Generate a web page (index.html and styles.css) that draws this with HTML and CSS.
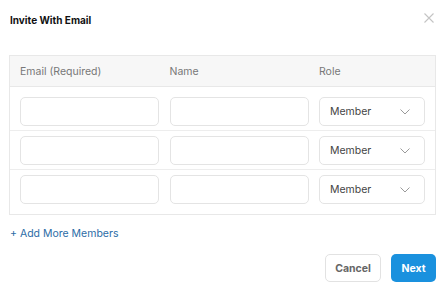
FILE: index.html
```html
<!DOCTYPE html>
<html lang="en">
<head>
    <meta charset="UTF-8">
    <meta name="viewport" content="width=device-width, initial-scale=1.0">
    <title>Invite With Email</title>
    <link rel="stylesheet" href="styles.css">
</head>
<body>
    <div class="modal">
        <div class="modal-head">
            <h2>Invite With Email</h2>
            <svg class="close" width="10" height="10" viewBox="0 0 10 10">
                <path d="M0.5 0.5 L9.5 9.5 M9.5 0.5 L0.5 9.5" stroke="#c4c4c4" stroke-width="1.1" fill="none"/>
            </svg>
        </div>

        <div class="invite-table">
            <div class="row head-row">
                <div>Email (Required)</div>
                <div>Name</div>
                <div>Role</div>
            </div>
            <div class="body">
                <div class="row">
                    <input type="text" class="field">
                    <input type="text" class="field">
                    <div class="field select"><span>Member</span>
                        <svg width="10" height="6" viewBox="0 0 10 6"><path d="M0.5 0.5 L5 5 L9.5 0.5" stroke="#9a9a9a" stroke-width="1" fill="none"/></svg>
                    </div>
                </div>
                <div class="row">
                    <input type="text" class="field">
                    <input type="text" class="field">
                    <div class="field select"><span>Member</span>
                        <svg width="10" height="6" viewBox="0 0 10 6"><path d="M0.5 0.5 L5 5 L9.5 0.5" stroke="#9a9a9a" stroke-width="1" fill="none"/></svg>
                    </div>
                </div>
                <div class="row">
                    <input type="text" class="field">
                    <input type="text" class="field">
                    <div class="field select"><span>Member</span>
                        <svg width="10" height="6" viewBox="0 0 10 6"><path d="M0.5 0.5 L5 5 L9.5 0.5" stroke="#9a9a9a" stroke-width="1" fill="none"/></svg>
                    </div>
                </div>
            </div>
        </div>

        <a class="add-more" href="#">+ Add More Members</a>

        <div class="actions">
            <button class="btn cancel">Cancel</button>
            <button class="btn next">Next</button>
        </div>
    </div>
</body>
</html>
```

FILE: styles.css
```css
body {
    margin: 0;
    background: #fff;
    font-family: Inter, "Liberation Sans", Arial, sans-serif;
    color: #333;
}

.modal {
    padding: 12px 10px 10px 9px;
}

.modal-head {
    display: flex;
    justify-content: space-between;
    align-items: flex-start;
    height: 16px;
    padding-left: 1px;
}

.modal-head h2 {
    margin: 0;
    font-size: 10px;
    line-height: 16px;
    font-weight: 700;
    color: #111;
}

.close {
    margin: 1px 2px 0 0;
}

.invite-table {
    margin-top: 27px;
    border: 1px solid #e8e8e8;
}

.row {
    display: grid;
    grid-template-columns: 139px 139px 1fr;
    column-gap: 10.5px;
    padding: 5px 10px 4px 10px;
    border-bottom: 1px solid #ededed;
}

.head-row {
    box-sizing: border-box;
    height: 31px;
    padding: 1px 10px 0 10px;
    align-items: center;
    background: #f7f7f7;
    border-bottom: 1px solid #e8e8e8;
    font-size: 10.5px;
    color: #787878;
}

.body {
    padding: 5px 0 6px 0;
}

.body .row:last-child {
    border-bottom: none;
}

.field {
    box-sizing: border-box;
    height: 29px;
    width: 100%;
    margin: 0;
    border: 1px solid #e4e4e4;
    border-radius: 5px;
    background: #fff;
    font-family: inherit;
    outline: none;
}

.select {
    display: flex;
    align-items: center;
    justify-content: space-between;
    padding: 0 14px 0 10px;
    font-size: 10.5px;
    color: #444;
}

.add-more {
    display: inline-block;
    margin: 12px 0 0 1px;
    font-size: 10.5px;
    line-height: 14px;
    color: #2c6ca6;
    text-decoration: none;
}

.actions {
    display: flex;
    justify-content: flex-end;
    gap: 10px;
    margin-top: 13px;
}

.btn {
    height: 28px;
    border-radius: 5px;
    font-family: inherit;
    font-size: 10.5px;
    font-weight: 700;
    cursor: pointer;
}

.cancel {
    width: 56px;
    background: #fff;
    border: 1px solid #e2e2e2;
    color: #666;
}

.next {
    width: 45px;
    background: #1a91de;
    border: none;
    color: #fff;
}
```
